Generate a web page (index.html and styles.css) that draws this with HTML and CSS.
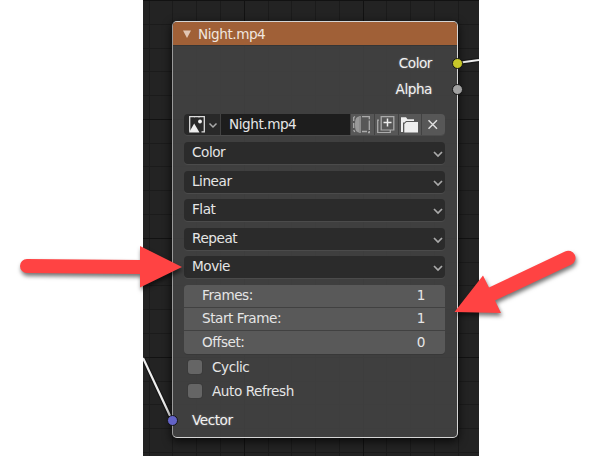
FILE: index.html
```
<!DOCTYPE html>
<html lang="en">
<head>
<meta charset="utf-8">
<title>Image Texture node</title>
<link rel="stylesheet" href="styles.css">
</head>
<body>
<main class="editor">
  <svg class="wire" viewBox="0 0 336 456">
    <path d="M0 358 29 420M314 63 336 60" stroke="#111" stroke-width="4.5" opacity=".6"/>
    <path d="M0 358 29 420M314 63 336 60" stroke="#eee" stroke-width="2.2"/>
  </svg>
  <section class="node">
    <header class="title"><svg class="tri" viewBox="0 0 8 8"><path d="M0 .5h8L4 8z"/></svg><span>Night.mp4</span></header>
    <div class="output">Color<i class="socket yellow"></i></div>
    <div class="output">Alpha<i class="socket gray"></i></div>
    <div class="datablock">
      <div class="browse">
        <svg width="36" height="21" viewBox="0 0 36 21"><path d="M11 2.7H5.7v15M14 2.7h6.3v15.1H17.500" fill="none" stroke="#ddd" stroke-width="1.3"/><path d="M10 2.700h6" stroke="#ddd" stroke-width="1.3"/><path d="M5 18.500 10.200 9.500 15.500 18.500z" fill="#eee"/><circle cx="16" cy="7.500" r="1.900" fill="#eee"/><path d="m25.500 9.500 3.500 3.500 3.500-3.500" fill="none" stroke="#aaa" stroke-width="1.500"/></svg>
      </div>
      <div class="name">Night.mp4</div>
      <div class="tool"><svg viewBox="0 0 23 21"><path d="M9 2.500C6 3 5 5 5 10.500S6 18 9 18.500z" fill="#999"/><path d="M3.700 7V3.500L5 2.500M3.700 9v5M3.700 16l1 2M10 2v17M12 2.700h7.300v2.500M19.300 6.500V16M12 17.500h5M19.300 17v1.500H18" fill="none" stroke="#aaa" stroke-width="1.300"/></svg></div>
      <div class="tool"><svg viewBox="0 0 23 21"><path d="M7.200 2.700h12.600v15.100H7.200zM5 6.700H3.700v14h12.600V18.500" transform="matrix(1 0 0 .88 0 .3)" fill="none" stroke="#aaa" stroke-width="1.300"/><path d="M13.500 4.500v8M9.500 8.500h8" stroke="#eee" stroke-width="1.500"/></svg></div>
      <div class="tool"><svg viewBox="0 0 23 21"><path d="M3 18V3.300h5l1.500 2H16V7H8L6.500 8.500H5V18z" fill="#eee"/><path d="M6.300 18.500V10L8.500 8H20v10.500z" fill="#eee"/></svg></div>
      <div class="tool"><svg viewBox="0 0 23 21"><path d="m7.500 6.300 8.500 8.500M16 6.300l-8.500 8.500" stroke="#ddd" stroke-width="1.500"/></svg></div>
    </div>
    <div class="menus">
      <div class="menu">Color<svg viewBox="0 0 10 8"><path d="m1 2 4 4 4-4"/></svg></div>
      <div class="menu">Linear<svg viewBox="0 0 10 8"><path d="m1 2 4 4 4-4"/></svg></div>
      <div class="menu">Flat<svg viewBox="0 0 10 8"><path d="m1 2 4 4 4-4"/></svg></div>
      <div class="menu">Repeat<svg viewBox="0 0 10 8"><path d="m1 2 4 4 4-4"/></svg></div>
      <div class="menu">Movie<svg viewBox="0 0 10 8"><path d="m1 2 4 4 4-4"/></svg></div>
    </div>
    <div class="numbers">
      <div class="number"><span>Frames:</span><span>1</span></div>
      <div class="number"><span>Start Frame:</span><span>1</span></div>
      <div class="number"><span>Offset:</span><span>0</span></div>
    </div>
    <div class="check"><i class="box"></i>Cyclic</div>
    <div class="check"><i class="box"></i>Auto Refresh</div>
    <div class="input">Vector<i class="socket blue"></i></div>
  </section>
  <svg class="grid" viewBox="0 0 336 456">
    <path class="line" d="M6.500 0v456M29.500 0v456M53.500 0v456M77.500 0v456M125.500 0v456M148.500 0v456M172.500 0v456M196.500 0v456M243.500 0v456M267.500 0v456M291.500 0v456M315.500 0v456M0 24.500h336M0 48.500h336M0 71.500h336M0 95.500h336M0 143.500h336M0 166.500h336M0 190.500h336M0 214.500h336M0 262.500h336M0 285.500h336M0 309.500h336M0 333.500h336M0 381.500h336M0 404.500h336M0 428.500h336M0 452.500h336"/>
    <path class="major" d="M101.500 0v456M220.500 0v456M0 .500h336M0 119.500h336M0 238.500h336M0 357.500h336"/>
  </svg>
</main>
<svg class="arrows" viewBox="0 0 596 456">
  <path d="M27 259 140 260V246L182 267 140 287.500V274L27 273A7 7 0 0 1 27 259z"/>
  <path d="M454.500 312 483 275.500 489 287.500 565 251.500A7 7 0 0 1 571.500 264.500L495 300.500 501 313z"/>
</svg>
</body>
</html>
```
FILE: styles.css
```
* { box-sizing: border-box; }
body {
  margin: 0;
  width: 596px;
  height: 456px;
  overflow: hidden;
  position: relative;
  background: #fff;
  font: 13.6px/20px "DejaVu Sans", sans-serif;
  letter-spacing: -.45px;
  color: #e6e6e6;
}
.editor {
  position: relative;
  isolation: isolate;
  width: 336px;
  height: 456px;
  margin-left: 143px;
  padding: 21px 0 0 29px;
  background: #232323;
  overflow: hidden;
}
.grid, .wire { position: absolute; left: 0; top: 0; width: 336px; height: 456px; fill: none; }
.grid { z-index: -1; }
.wire { z-index: 1; }
.line { stroke: #1b1b1b; }
.major { stroke: #121212; }
.node {
  position: relative;
  z-index: 2;
  width: 286px;
  height: 417px;
  border: 1px solid #d5d5d5;
  border-left-color: #999;
  border-radius: 5px;
  background: rgba(67, 67, 67, .9);
  box-shadow: 0 3px 9px 1px rgba(0, 0, 0, .65);
}
.title {
  height: 23px;
  display: flex;
  align-items: center;
  gap: 7px;
  padding-left: 10px;
  border-radius: 4px 4px 0 0;
  background: #a06037;
  box-shadow: 0 1px #353535;
  color: #f0e6df;
}
.tri { width: 8px; height: 8px; fill: #e2c6b4; }
.output, .input { position: relative; color: #f2f2f2; text-shadow: 0 0 2px rgba(255, 255, 255, .35); }
.output { height: 26px; line-height: 27px; padding-right: 25px; text-align: right; }
.title + .output { margin-top: 5px; }
.socket { position: absolute; width: 11px; height: 11px; border: 1px solid #151515; border-radius: 50%; }
.output .socket { right: -5.5px; top: 7.5px; }
.yellow { background: #c7c729; }
.gray { background: #a1a1a1; }
.blue { background: #6363c7; }
.datablock {
  display: grid;
  grid-template-columns: 36px 129px repeat(4, 1fr);
  gap: 1px;
  width: 261px;
  height: 21px;
  margin: 12px 0 7px 11px;
  border-radius: 4px;
  background: #424242;
  box-shadow: 0 1px #4b4b4b;
  overflow: hidden;
}
.browse { background: #292929; }
.browse svg { display: block; }
.name { background: #1d1d1d; padding-left: 8px; line-height: 21px; }
.tool { background: #575757; }
.tool svg { display: block; width: 23px; height: 21px; margin-left: -1px; fill: none; }
.menus {
  display: grid;
  grid-template-rows: 29px 28px 29px 28px 29px;
  margin: 0 12px 0 11px;
}
.menu {
  display: flex;
  justify-content: space-between;
  height: 22px;
  padding: 0 2px 0 8px;
  border-radius: 4px;
  background: #2b2b2b;
  box-shadow: 0 1px #4b4b4b;
  line-height: 21px;
}
.menu svg { width: 10px; height: 8px; margin-top: 8px; fill: none; stroke: #aaa; stroke-width: 1.7; }
.numbers {
  display: grid;
  grid-template-rows: 22px 22px 23px;
  gap: 1px;
  margin: 0 12px 6px 11px;
  border-radius: 4px;
  background: #414141;
  box-shadow: 0 1px #383838;
  overflow: hidden;
}
.number { display: flex; justify-content: space-between; padding: 0 20px 0 18px; background: #595959; line-height: 21px; }
.number:last-child { line-height: 22px; }
.check { display: flex; gap: 10px; height: 24px; margin-left: 15px; line-height: 14px; }
.box { width: 14px; height: 14px; border-radius: 3px; background: #656565; box-shadow: 0 0 0 1px #3b3b3b; }
.input { height: 24px; line-height: 25px; padding-left: 19px; }
.input .socket { left: -6px; top: 7px; }
.arrows {
  position: absolute;
  inset: 0;
  z-index: 3;
  width: 596px;
  height: 456px;
  fill: #ff4343;
  filter: drop-shadow(1px 3px 2px rgba(0, 0, 0, .55));
}
```
